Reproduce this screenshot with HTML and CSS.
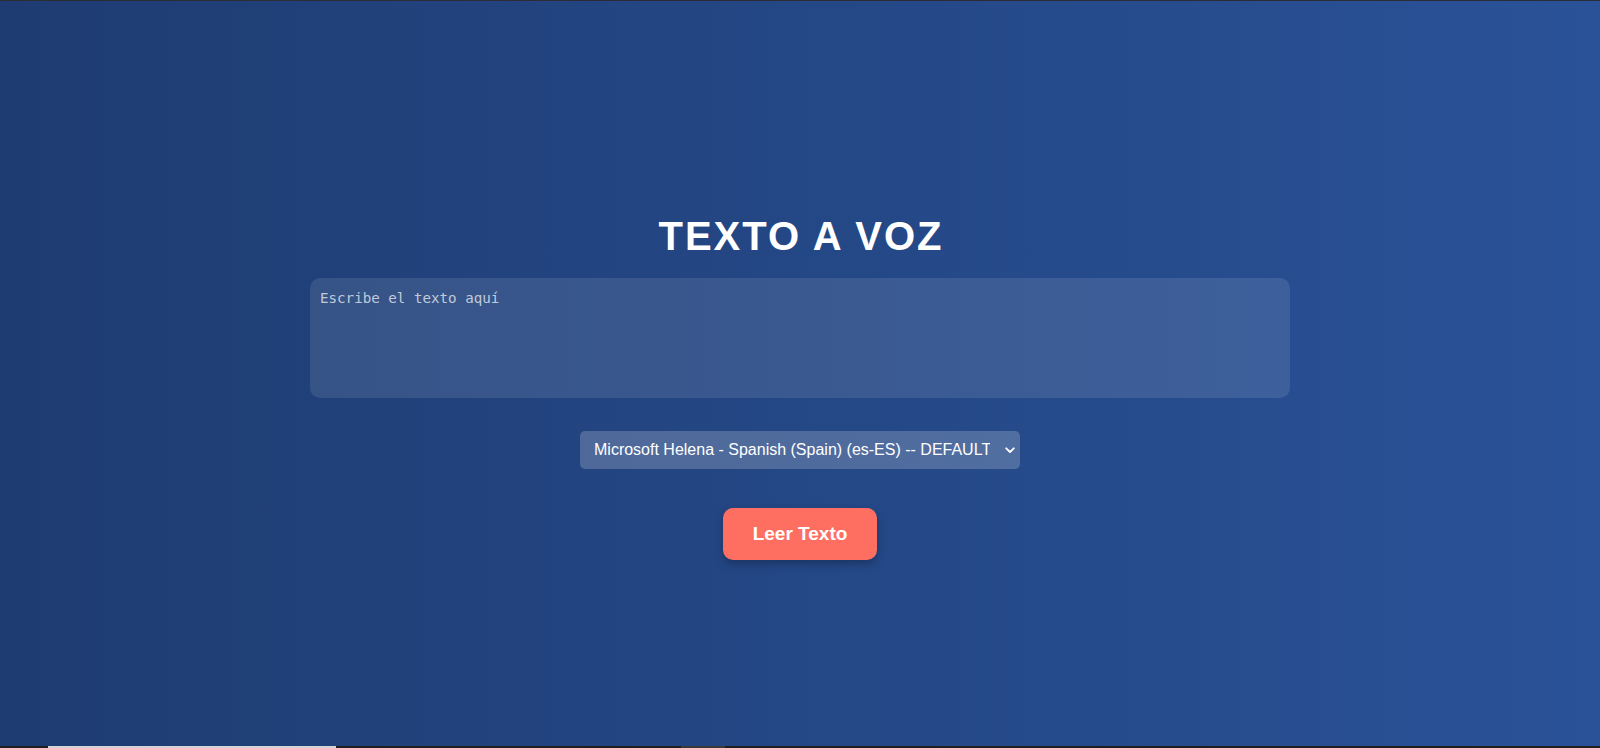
FILE: index.html
```html
<!DOCTYPE html>
<html lang="es">
<head>
<meta charset="utf-8">
<title>Texto a Voz</title>
<link rel="stylesheet" href="styles.css">
</head>
<body>
<div class="page">
  <div class="topline"></div>
  <main class="main">
    <div class="panel">
      <h1 class="title">TEXTO A VOZ</h1>
      <textarea class="text-input" placeholder="Escribe el texto aquí"></textarea>
      <div class="select-wrap">
        <select class="voice-select">
          <option>Microsoft Helena - Spanish (Spain) (es-ES) -- DEFAULT</option>
        </select>
        <svg class="chevron" width="10" height="7" viewBox="0 0 10 7" aria-hidden="true"><path d="M1.2 1.3 L5 5 L8.8 1.3" fill="none" stroke="#ffffff" stroke-width="1.8" stroke-linecap="round" stroke-linejoin="round"/></svg>
      </div>
      <button class="read-btn">Leer Texto</button>
    </div>
  </main>
  <div class="bottombar">
    <div class="bar-light"></div>
    <div class="bar-gap"></div>
    <div class="bar-gray"></div>
  </div>
</div>
</body>
</html>
```
FILE: styles.css
```css
html, body {
  margin: 0;
  padding: 0;
  height: 100%;
}

body {
  font-family: "Liberation Sans", Arial, sans-serif;
  background: #1e1f22;
}

.page {
  height: 100vh;
  display: flex;
  flex-direction: column;
}

.topline {
  height: 1px;
  background: #2c2c36;
  flex: none;
}

.main {
  flex: 1;
  background: linear-gradient(to right, #1e3c72, #2a5298);
  display: flex;
  flex-direction: column;
  align-items: center;
  justify-content: center;
  padding-top: 25px;
  box-sizing: border-box;
}

.panel {
  display: flex;
  flex-direction: column;
  align-items: center;
}

.title {
  margin: 0 0 19px;
  color: #ffffff;
  font-size: 40px;
  line-height: 46px;
  font-weight: 700;
  letter-spacing: 2px;
  text-indent: 2px;
}

.text-input {
  display: block;
  box-sizing: border-box;
  width: 980px;
  height: 120px;
  margin: 0;
  padding: 12px 10px;
  border: none;
  border-radius: 10px;
  background: rgba(255, 255, 255, 0.1);
  color: #ffffff;
  font-family: "DejaVu Sans Mono", "Liberation Mono", monospace;
  font-size: 14.2px;
  resize: none;
  outline: none;
}

.text-input::placeholder {
  color: rgba(255, 255, 255, 0.7);
}

.select-wrap {
  position: relative;
  margin-top: 33px;
}

.voice-select {
  display: block;
  box-sizing: border-box;
  width: 440px;
  height: 38px;
  padding: 0 30px 0 14px;
  border: none;
  border-radius: 5px;
  background: rgba(255, 255, 255, 0.2);
  color: #ffffff;
  font-family: "Liberation Sans", Arial, sans-serif;
  font-size: 16px;
  appearance: none;
  -webkit-appearance: none;
  outline: none;
}

.voice-select option {
  color: #000000;
}

.chevron {
  position: absolute;
  right: 5px;
  top: 16px;
  pointer-events: none;
}

.read-btn {
  margin-top: 39px;
  padding: 15px 30px;
  border: none;
  border-radius: 10px;
  background: #ff6f61;
  color: #ffffff;
  font-family: "Liberation Sans", Arial, sans-serif;
  font-size: 19px;
  font-weight: 700;
  box-shadow: 0 4px 8px rgba(0, 0, 0, 0.25);
  cursor: pointer;
}

.bottombar {
  height: 2px;
  flex: none;
  display: flex;
  background: #1f1f1f;
}

.bar-light {
  margin-left: 48px;
  width: 288px;
  background: #d4d4d4;
}

.bar-gap {
  width: 345px;
}

.bar-gray {
  width: 44px;
  background: #3a3a3a;
}
```
